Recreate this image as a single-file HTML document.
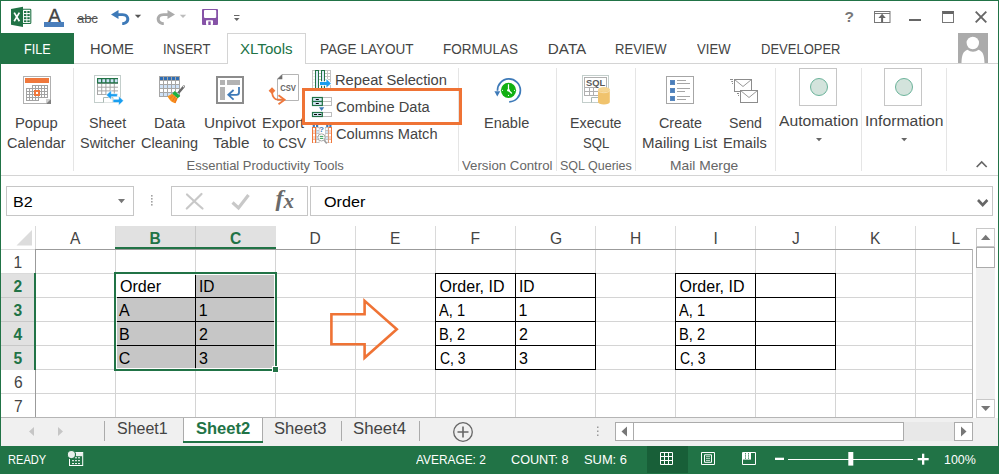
<!DOCTYPE html>
<html lang="en"><head><meta charset="utf-8"><title>Excel - XLTools Combine Data</title>
<style>
html,body{margin:0;padding:0}
body{width:999px;height:474px;position:relative;overflow:hidden;background:#fff;font-family:"Liberation Sans",sans-serif;color:#444444}
.t{position:absolute;line-height:0;white-space:pre;transform-origin:0 0}
.b{position:absolute;box-sizing:border-box}
svg{position:absolute;overflow:visible}
section,header,footer,nav,main{position:absolute;left:0;top:0}
.ln{position:absolute;background:#d4d4d4}
.sep{position:absolute;background:#e5e5e5;width:1px;top:68px;height:103px}
.blk{position:absolute;background:#000}

</style></head><body>
<header id="titlebar">
<svg style="left:11px;top:6px" width="21" height="22" viewBox="0 0 21 22">
<rect x="11.5" y="3.2" width="8.3" height="14.3" rx="0.8" fill="#fff" stroke="#217346" stroke-width="1.1"/>
<g fill="#217346"><rect x="13" y="5" width="2.4" height="2"/><rect x="16.3" y="5" width="2.4" height="2"/><rect x="13" y="8.1" width="2.4" height="2"/><rect x="16.3" y="8.1" width="2.4" height="2"/><rect x="13" y="11.2" width="2.4" height="2"/><rect x="16.3" y="11.2" width="2.4" height="2"/><rect x="13" y="14.3" width="2.4" height="1.8"/><rect x="16.3" y="14.3" width="2.4" height="1.8"/></g>
<path d="M0 3L12 0.8V21L0 18.8Z" fill="#217346"/>
<path d="M3.2 6.6L8.4 15.2M8.4 6.6L3.2 15.2" stroke="#fff" stroke-width="1.7" fill="none"/>
</svg>
<span class="t" style="left:48.3px;top:15.5px;font-size:18.8px;color:#444;-webkit-text-stroke:0.35px #444">A</span>
<div class="b" style="left:44px;top:22px;width:20px;height:5px;background:#4a7ebb"></div>
<span class="t" style="left:77px;top:18.5px;font-size:13.2px;color:#555;text-decoration:line-through;letter-spacing:-0.2px">abc</span>
<svg style="left:110px;top:9px" width="21" height="17" viewBox="0 0 21 17">
<path d="M1 5.5L8.5 1V4.2H12.5C17 4.2 19.3 7 19.3 10C19.3 13.5 16.5 16 12.2 16V13.2C14.8 13.2 16.3 12 16.3 10C16.3 8.2 15 7 12.5 7H8.5V10Z" fill="#3e7ab8"/>
</svg>
<svg style="left:134px;top:14px" width="8" height="5"><path d="M0.8 0.8H7.2L4 4Z" fill="#555"/></svg>
<svg style="left:155px;top:9px" width="21" height="17" viewBox="0 0 21 17">
<path d="M20 5.5L12.5 1V4.2H8.5C4 4.2 1.700 7 1.700 10C1.700 13.500 4.500 16 8.800 16V13.2C6.200 13.2 4.700 12 4.700 10C4.700 8.200 6 7 8.500 7H12.5V10Z" fill="#ababab"/>
</svg>
<svg style="left:179px;top:14px" width="8" height="5"><path d="M0.8 0.8H7.2L4 4Z" fill="#bdbdbd"/></svg>
<svg style="left:202px;top:9px" width="16" height="16" viewBox="0 0 16 16">
<rect x="0" y="0" width="16" height="16" rx="1" fill="#8653a7"/>
<rect x="2" y="0.9" width="12.2" height="8" rx="0.8" fill="#fff"/>
<rect x="4" y="11.3" width="7" height="4.7" rx="0.8" fill="#fff"/>
<rect x="6.300" y="12.4" width="2.400" height="3.600" fill="#8653a7"/>
</svg>
<svg style="left:234px;top:15px" width="6" height="7"><rect x="0" y="0" width="5.500" height="1" fill="#666"/><path d="M0 3H5.500L2.750 6Z" fill="#666"/></svg>
<span class="t" style="left:844.5px;top:17px;font-size:15.5px;font-weight:700;color:#777">?</span>
<svg style="left:874px;top:11px" width="17" height="12" viewBox="0 0 17 12">
<rect x="0.5" y="0.5" width="15.5" height="11" fill="none" stroke="#777" stroke-width="1"/>
<rect x="0.5" y="2" width="15.500" height="1" fill="#777"/>
<path d="M8.100 2.700L11.800 7H9.100V11.500H7.100V7H4.400Z" fill="#666"/>
</svg>
<div class="b" style="left:909px;top:19px;width:12px;height:2px;background:#666"></div>
<div class="b" style="left:942px;top:11px;width:12px;height:12px;border:1px solid #777;border-top:3px solid #666"></div>
<svg style="left:975px;top:11px" width="12" height="12" viewBox="0 0 12 12"><path d="M0.700 0.700L11.300 11.300M11.300 0.700L0.700 11.300" stroke="#666" stroke-width="1.900" fill="none"/></svg>
<svg style="left:958px;top:33px" width="30" height="30" viewBox="0 0 30 30">
<rect width="30" height="30" fill="#ababab"/>
<path d="M3.500 30C3.800 22 5 18.500 9.500 16.800C11 18 13 18.700 15 18.700C17 18.700 19 18 20.500 16.800C25 18.500 26.200 22 26.500 30Z" fill="#fff"/>
<circle cx="14.800" cy="10" r="6.200" fill="#fff"/>
</svg>

</header>
<nav id="tabs">
<div class="b" style="left:0;top:63px;width:999px;height:1px;background:#d4d4d4"></div>
<div class="b" style="left:0;top:33px;width:74px;height:31px;background:#217346"></div>
<div class="b" style="left:227px;top:33px;width:79px;height:31px;border:1px solid #d4d4d4;border-bottom:none;background:#fff"></div>

<span class="t" style="left:23.7px;top:48.6px;font-size:15.3px;transform:scaleX(0.823);color:#fff;">FILE</span>
<span class="t" style="left:90.0px;top:48.6px;font-size:15.3px;transform:scaleX(0.956);">HOME</span>
<span class="t" style="left:162.5px;top:48.6px;font-size:15.3px;transform:scaleX(0.849);">INSERT</span>
<span class="t" style="left:239.5px;top:48.6px;font-size:15.3px;transform:scaleX(0.987);color:#217346;">XLTools</span>
<span class="t" style="left:320.4px;top:48.6px;font-size:15.3px;transform:scaleX(0.885);">PAGE LAYOUT</span>
<span class="t" style="left:443.4px;top:48.6px;font-size:15.3px;transform:scaleX(0.881);">FORMULAS</span>
<span class="t" style="left:547.8px;top:48.6px;font-size:15.3px;">DATA</span>
<span class="t" style="left:615.4px;top:48.6px;font-size:15.3px;transform:scaleX(0.853);">REVIEW</span>
<span class="t" style="left:697.0px;top:48.6px;font-size:15.3px;transform:scaleX(0.857);">VIEW</span>
<span class="t" style="left:760.9px;top:48.6px;font-size:15.3px;transform:scaleX(0.850);">DEVELOPER</span>
</nav>
<section id="ribbon">
<div class="b" style="left:0;top:175px;width:999px;height:1px;background:#d4d4d4"></div>
<div class="sep" style="left:73px"></div>
<div class="sep" style="left:458px"></div>
<div class="sep" style="left:556px"></div>
<div class="sep" style="left:635px"></div>
<div class="sep" style="left:775px"></div>
<div class="sep" style="left:861px"></div>
<div class="sep" style="left:946px"></div>
<div class="b" style="left:799px;top:68px;width:38px;height:38px;border:1px solid #c6c6c6;background:#fff"></div>
<div class="b" style="left:884px;top:68px;width:38px;height:38px;border:1px solid #c6c6c6;background:#fff"></div>
<div class="b" style="left:810px;top:78px;width:18px;height:18px;border:1px solid #6bb39a;border-radius:50%;background:#d3e3dc"></div>
<div class="b" style="left:895px;top:78px;width:18px;height:18px;border:1px solid #6bb39a;border-radius:50%;background:#d3e3dc"></div>

<svg style="left:0;top:0" width="999" height="176" viewBox="0 0 999 176">
<g id="ic-calendar">
<rect x="23.5" y="76.5" width="27" height="27" fill="#fff" stroke="#b0b0b0"/>
<rect x="25" y="78" width="24" height="5" fill="#f0783c"/>
<path d="M32 85H48V98H39V101H26V88H32Z" fill="#a3a3a3"/>
<rect x="33" y="86" width="2" height="2" fill="#fff"/>
<rect x="36" y="86" width="2" height="2" fill="#fff"/>
<rect x="39" y="86" width="2" height="2" fill="#fff"/>
<rect x="42" y="86" width="2" height="2" fill="#fff"/>
<rect x="45" y="86" width="2" height="2" fill="#fff"/>
<rect x="27" y="89" width="2" height="2" fill="#fff"/>
<rect x="30" y="89" width="2" height="2" fill="#fff"/>
<rect x="33" y="89" width="2" height="2" fill="#fff"/>
<rect x="36" y="89" width="2" height="2" fill="#fff"/>
<rect x="39" y="89" width="2" height="2" fill="#fff"/>
<rect x="42" y="89" width="2" height="2" fill="#fff"/>
<rect x="45" y="89" width="2" height="2" fill="#fff"/>
<rect x="27" y="92" width="2" height="2" fill="#fff"/>
<rect x="30" y="92" width="2" height="2" fill="#fff"/>
<rect x="33" y="92" width="2" height="2" fill="#fff"/>
<rect x="36" y="92" width="2" height="2" fill="#fff"/>
<rect x="39" y="92" width="2" height="2" fill="#fff"/>
<rect x="42" y="92" width="2" height="2" fill="#fff"/>
<rect x="45" y="92" width="2" height="2" fill="#fff"/>
<rect x="27" y="95" width="2" height="2" fill="#fff"/>
<rect x="30" y="95" width="2" height="2" fill="#fff"/>
<rect x="33" y="95" width="2" height="2" fill="#fff"/>
<rect x="36" y="95" width="2" height="2" fill="#fff"/>
<rect x="39" y="95" width="2" height="2" fill="#fff"/>
<rect x="42" y="95" width="2" height="2" fill="#fff"/>
<rect x="45" y="95" width="2" height="2" fill="#fff"/>
<rect x="27" y="98" width="2" height="2" fill="#fff"/>
<rect x="30" y="98" width="2" height="2" fill="#fff"/>
<rect x="33" y="98" width="2" height="2" fill="#fff"/>
<rect x="36" y="98" width="2" height="2" fill="#fff"/>
<rect x="34" y="90" width="6" height="6" fill="#f0783c"/><rect x="36" y="92" width="2" height="2" fill="#fff"/>
<path d="M46 99H51V104H46Z" fill="#d0d0d0"/><path d="M51 99V104H46Z" fill="#7f7f7f"/>
</g>
<g id="ic-switcher">
<rect x="94.5" y="75.5" width="26" height="27" fill="#fff" stroke="#c3cecb"/>
<rect x="97" y="78" width="21" height="17" fill="#a6a6a6"/>
<rect x="98.0" y="84.0" width="3.2" height="2.7" fill="#fff"/>
<rect x="102.2" y="84.0" width="3.2" height="2.7" fill="#fff"/>
<rect x="106.4" y="84.0" width="3.2" height="2.7" fill="#fff"/>
<rect x="110.6" y="84.0" width="3.2" height="2.7" fill="#fff"/>
<rect x="114.8" y="84.0" width="3.2" height="2.7" fill="#fff"/>
<rect x="98.0" y="87.7" width="3.2" height="2.7" fill="#fff"/>
<rect x="102.2" y="87.7" width="3.2" height="2.7" fill="#fff"/>
<rect x="106.4" y="87.7" width="3.2" height="2.7" fill="#fff"/>
<rect x="110.6" y="87.7" width="3.2" height="2.7" fill="#fff"/>
<rect x="114.8" y="87.7" width="3.2" height="2.7" fill="#fff"/>
<rect x="98.0" y="91.4" width="3.2" height="2.7" fill="#fff"/>
<rect x="102.2" y="91.4" width="3.2" height="2.7" fill="#fff"/>
<rect x="106.4" y="91.4" width="3.2" height="2.7" fill="#fff"/>
<rect x="110.6" y="91.4" width="3.2" height="2.7" fill="#fff"/>
<rect x="114.8" y="91.4" width="3.2" height="2.7" fill="#fff"/>
<rect x="97" y="78" width="21" height="5.5" fill="#217346"/>
<rect x="98.20" y="79.2" width="2.8" height="3" fill="#cfe2f7"/>
<rect x="102.35" y="79.2" width="2.8" height="3" fill="#cfe2f7"/>
<rect x="106.50" y="79.2" width="2.8" height="3" fill="#cfe2f7"/>
<rect x="110.65" y="79.2" width="2.8" height="3" fill="#cfe2f7"/>
<rect x="114.80" y="79.2" width="2.8" height="3" fill="#cfe2f7"/>
<path d="M103.5 102.500V97.500H113V102.500" fill="#fff" stroke="#a9b8b3"/>
<path d="M106.300 95L111.300 90.300V93.700H117.400V96.800H111.300V99.800Z" fill="#199ef0" stroke="#fff" stroke-width="0.6"/>
<path d="M123.500 100.800L118.700 96V99.200H113V102.600H118.700V105.500Z" fill="#199ef0" stroke="#fff" stroke-width="0.6"/>
</g>
<g id="ic-cleaning">
<rect x="159" y="76" width="21" height="21" fill="#a6a6a6"/>
<rect x="160" y="77" width="3" height="3" fill="#2e6db4"/>
<rect x="164" y="77" width="3" height="3" fill="#2e6db4"/>
<rect x="168" y="77" width="3" height="3" fill="#2e6db4"/>
<rect x="172" y="77" width="3" height="3" fill="#2e6db4"/>
<rect x="176" y="77" width="3" height="3" fill="#2e6db4"/>
<rect x="160" y="81" width="3" height="3" fill="#fff"/>
<rect x="164" y="81" width="3" height="3" fill="#fff"/>
<rect x="168" y="81" width="3" height="3" fill="#fff"/>
<rect x="172" y="81" width="3" height="3" fill="#fff"/>
<rect x="176" y="81" width="3" height="3" fill="#fff"/>
<rect x="160" y="85" width="3" height="3" fill="#cfe2f7"/>
<rect x="164" y="85" width="3" height="3" fill="#cfe2f7"/>
<rect x="168" y="85" width="3" height="3" fill="#cfe2f7"/>
<rect x="172" y="85" width="3" height="3" fill="#cfe2f7"/>
<rect x="176" y="85" width="3" height="3" fill="#cfe2f7"/>
<rect x="160" y="89" width="3" height="3" fill="#fff"/>
<rect x="164" y="89" width="3" height="3" fill="#fff"/>
<rect x="168" y="89" width="3" height="3" fill="#fff"/>
<rect x="172" y="89" width="3" height="3" fill="#fff"/>
<rect x="176" y="89" width="3" height="3" fill="#fff"/>
<rect x="160" y="93" width="3" height="3" fill="#cfe2f7"/>
<rect x="164" y="93" width="3" height="3" fill="#cfe2f7"/>
<rect x="168" y="93" width="3" height="3" fill="#cfe2f7"/>
<rect x="172" y="93" width="3" height="3" fill="#cfe2f7"/>
<rect x="176" y="93" width="3" height="3" fill="#cfe2f7"/>
<path d="M183.800 86.500L179 92.300" stroke="#6a6a6a" stroke-width="2.4" stroke-linecap="round"/>
<circle cx="183.600" cy="86.600" r="0.8" fill="#e8e8e8"/>
<path d="M174.600 91L180.200 95.700L177.700 98.600L172.200 93.800Z" fill="#1fb141"/>
<path d="M172.200 93.800L177.700 98.600L175.500 103.200C172.500 103 169.500 100.300 167.500 96.300Z" fill="#f7941d"/>
<path d="M173.300 95.200L169.800 98.800M175 96.600L172.500 101.200M176.600 98L175 102.800" stroke="#ee6a24" stroke-width="0.9"/>
</g>
<g id="ic-unpivot">
<rect x="217" y="77" width="26" height="26" fill="#fff" stroke="#8c8c8c" stroke-width="2"/>
<rect x="220" y="80" width="5" height="5" fill="#b3b3b3"/><rect x="227" y="80" width="13" height="5" fill="#b3b3b3"/><rect x="220" y="87" width="5" height="13" fill="#b3b3b3"/>
<path d="M239 87V92.500Q239 94.800 236.500 94.800H228.500M233.600 90L228.300 94.800L233.600 99.600" fill="none" stroke="#3e7ab8" stroke-width="1.8"/>
</g>
<g id="ic-csv">
<path d="M282 74.500H298.500V100.500H277.500V79Z" fill="#fff" stroke="#b5b5b5"/>
<path d="M282.300 74.200V79.300H277.200Z" fill="#6e6e6e"/>
<text x="280.200" y="91.300" font-size="9.200" font-weight="700" fill="#666" font-family="Liberation Sans,sans-serif" textLength="15.8" lengthAdjust="spacingAndGlyphs">CSV</text>
<path d="M272 87.300L275.400 90.700L272 94.100L268.600 90.700Z" fill="#f0783c"/>
<path d="M272 92C272.500 97 274 99.600 278 99.700H284" fill="none" stroke="#f0783c" stroke-width="1.800"/>
<path d="M278.500 95.300L284.600 99.800L278.500 104.300" fill="none" stroke="#f0783c" stroke-width="1.800"/>
</g>
<g id="ic-repeat">
<rect x="312" y="70" width="19" height="19" fill="#c4c4c4"/>
<rect x="313" y="71" width="2" height="2.700" fill="#fff"/>
<rect x="316" y="71" width="2" height="2" fill="#fff"/>
<rect x="319" y="71" width="2" height="2" fill="#fff"/>
<rect x="322" y="71" width="2" height="2" fill="#fff"/>
<rect x="325" y="71" width="2" height="2" fill="#fff"/>
<rect x="328" y="71" width="2" height="2" fill="#fff"/>
<rect x="313" y="74" width="2" height="2.700" fill="#fff"/>
<rect x="316" y="74" width="2" height="2" fill="#fff"/>
<rect x="319" y="74" width="2" height="2" fill="#fff"/>
<rect x="322" y="74" width="2" height="2" fill="#fff"/>
<rect x="325" y="74" width="2" height="2" fill="#fff"/>
<rect x="328" y="74" width="2" height="2" fill="#fff"/>
<rect x="313" y="77" width="2" height="2.700" fill="#fff"/>
<rect x="316" y="77" width="2" height="2" fill="#fff"/>
<rect x="319" y="77" width="2" height="2" fill="#fff"/>
<rect x="322" y="77" width="2" height="2" fill="#fff"/>
<rect x="325" y="77" width="2" height="2" fill="#fff"/>
<rect x="328" y="77" width="2" height="2" fill="#fff"/>
<rect x="313" y="80" width="2" height="2.700" fill="#fff"/>
<rect x="316" y="80" width="2" height="2" fill="#fff"/>
<rect x="319" y="80" width="2" height="2" fill="#fff"/>
<rect x="322" y="80" width="2" height="2" fill="#fff"/>
<rect x="325" y="80" width="2" height="2" fill="#fff"/>
<rect x="328" y="80" width="2" height="2" fill="#fff"/>
<rect x="313" y="83" width="2" height="2.700" fill="#fff"/>
<rect x="316" y="83" width="2" height="2" fill="#fff"/>
<rect x="319" y="83" width="2" height="2" fill="#fff"/>
<rect x="322" y="83" width="2" height="2" fill="#fff"/>
<rect x="325" y="83" width="2" height="2" fill="#fff"/>
<rect x="328" y="83" width="2" height="2" fill="#fff"/>
<rect x="313" y="86" width="2" height="2.700" fill="#fff"/>
<rect x="316" y="86" width="2" height="2" fill="#fff"/>
<rect x="319" y="86" width="2" height="2" fill="#fff"/>
<rect x="322" y="86" width="2" height="2" fill="#fff"/>
<rect x="325" y="86" width="2" height="2" fill="#fff"/>
<rect x="328" y="86" width="2" height="2" fill="#fff"/>
<rect x="315" y="70" width="4" height="19" fill="#217346"/>
<rect x="316" y="71" width="2" height="3" fill="#dbe9f9"/>
<rect x="316" y="74" width="2" height="3" fill="#dbe9f9"/>
<rect x="316" y="77" width="2" height="3" fill="#dbe9f9"/>
<rect x="316" y="80" width="2" height="3" fill="#dbe9f9"/>
<rect x="316" y="83" width="2" height="3" fill="#dbe9f9"/>
<rect x="316" y="86" width="2" height="3" fill="#dbe9f9"/>
<rect x="321" y="70" width="4" height="19" fill="#217346"/>
<rect x="322" y="71" width="2" height="3" fill="#dbe9f9"/>
<rect x="322" y="74" width="2" height="3" fill="#dbe9f9"/>
<rect x="322" y="77" width="2" height="3" fill="#dbe9f9"/>
<rect x="322" y="80" width="2" height="3" fill="#dbe9f9"/>
<rect x="322" y="83" width="2" height="3" fill="#dbe9f9"/>
<rect x="322" y="86" width="2" height="3" fill="#dbe9f9"/>
<path d="M320 82H326.400V79.200L330.900 83.400L326.400 87.600V85H320Z" fill="#fff" stroke="#fff" stroke-width="1.6"/><path d="M320 81.900H326.400V79.200L330.900 83.400L326.400 87.600V85.100H320Z" fill="#199ef0"/>
</g>
<g id="ic-combine">
<rect x="322.5" y="97.5" width="9" height="4" fill="#fff" stroke="#bdbdbd"/>
<rect x="322.5" y="101.5" width="9" height="4" fill="#fff" stroke="#bdbdbd"/>
<rect x="322.5" y="112.5" width="9" height="4" fill="#fff" stroke="#bdbdbd"/>
<rect x="312.500" y="97.5" width="9.800" height="4" fill="#dbe9f9" stroke="#217346" stroke-width="1.2"/>
<rect x="312.500" y="101.5" width="9.800" height="4" fill="#dbe9f9" stroke="#217346" stroke-width="1.2"/>
<rect x="312.500" y="112.5" width="9.800" height="4" fill="#dbe9f9" stroke="#217346" stroke-width="1.2"/>
<rect x="315.800" y="99" width="3" height="1" fill="#000"/><rect x="315.800" y="103" width="3" height="1" fill="#000"/>
<rect x="314" y="114" width="3" height="1" fill="#000"/><rect x="318.300" y="114" width="3" height="1" fill="#000"/>
<path d="M319 107.300H324.200L321.600 110.900Z" fill="#3e7ab8"/>
</g>
<g id="ic-match">
<rect x="312.7" y="125" width="2.2" height="2" fill="#3e7ab8"/>
<rect x="316" y="125" width="2.2" height="2" fill="#3e7ab8"/>
<rect x="326.2" y="125" width="2.2" height="2" fill="#3e7ab8"/>
<rect x="329.3" y="125" width="2.2" height="2" fill="#3e7ab8"/>
<rect x="312" y="127" width="4" height="16" fill="#f0783c"/>
<rect x="313" y="128" width="2" height="2.700" fill="#fff"/>
<rect x="313" y="131" width="2" height="2.700" fill="#f6d9cc"/>
<rect x="313" y="134" width="2" height="2.700" fill="#fff"/>
<rect x="313" y="137" width="2" height="2.700" fill="#f6d9cc"/>
<rect x="313" y="140" width="2" height="2.700" fill="#fff"/>
<rect x="328" y="127" width="4" height="16" fill="#f0783c"/>
<rect x="329" y="128" width="2" height="2.700" fill="#fff"/>
<rect x="329" y="131" width="2" height="2.700" fill="#f6d9cc"/>
<rect x="329" y="134" width="2" height="2.700" fill="#fff"/>
<rect x="329" y="137" width="2" height="2.700" fill="#f6d9cc"/>
<rect x="329" y="140" width="2" height="2.700" fill="#fff"/>
<rect x="316" y="127" width="3.500" height="16" fill="#c4c4c4"/>
<rect x="316.7" y="128" width="2.100" height="2" fill="#fff"/>
<rect x="316.7" y="131" width="2.100" height="2" fill="#cfe5fa"/>
<rect x="316.7" y="134" width="2.100" height="2" fill="#fff"/>
<rect x="316.7" y="137" width="2.100" height="2" fill="#cfe5fa"/>
<rect x="316.7" y="140" width="2.100" height="2" fill="#fff"/>
<rect x="325" y="127" width="3.500" height="16" fill="#c4c4c4"/>
<rect x="325.7" y="128" width="2.100" height="2" fill="#fff"/>
<rect x="325.7" y="131" width="2.100" height="2" fill="#cfe5fa"/>
<rect x="325.7" y="134" width="2.100" height="2" fill="#fff"/>
<rect x="325.7" y="137" width="2.100" height="2" fill="#cfe5fa"/>
<rect x="325.7" y="140" width="2.100" height="2" fill="#fff"/>
<text x="321.500" y="131.800" font-size="8" font-weight="700" fill="#3e7ab8" text-anchor="middle" font-family="Liberation Sans,sans-serif">?</text>
<path d="M324 140L326.800 143.400" stroke="#a0a0a0" stroke-width="1.600"/>
<circle cx="321.500" cy="137.400" r="3.600" fill="#fff" stroke="#a8a8a8" stroke-width="1"/>
<rect x="319.800" y="135.900" width="3.500" height="0.9" fill="#1a9641"/><rect x="319.800" y="137.900" width="3.500" height="0.9" fill="#1a9641"/>
</g>
<g id="ic-clock">
<path d="M509.200 101.800A11.450 11.450 0 1 0 497.500 90.800" fill="none" stroke="#3e7ab8" stroke-width="1.700"/>
<path d="M494.400 91.300H500.200L497.300 96.400Z" fill="#3e7ab8"/>
<circle cx="508.500" cy="90.300" r="7.600" fill="#12b012"/>
<path d="M508.500 84.200V90.300L511.800 93.500" fill="none" stroke="#fff" stroke-width="1.200"/>
<circle cx="508.500" cy="90.300" r="1.300" fill="#fff"/>
<circle cx="502.500" cy="90.300" r="0.600" fill="#fff"/><circle cx="514.500" cy="90.300" r="0.600" fill="#fff"/><circle cx="508.500" cy="95.400" r="0.600" fill="#fff"/>
</g>
<g id="ic-sql">
<rect x="582.500" y="75.500" width="26" height="27" fill="#fff" stroke="#c3cecb"/>
<rect x="584.500" y="77.500" width="22" height="18" fill="#fff" stroke="#b0b0b0"/>
<path d="M584.500 87.500H598M584.500 91.500H598M589.500 87.500V95.500M593.500 87.500V95.500" stroke="#b0b0b0" fill="none"/>
<text x="586" y="85.700" font-size="9.600" font-weight="700" fill="#5a5a5a" font-family="Liberation Sans,sans-serif" textLength="19.2" lengthAdjust="spacingAndGlyphs">SQL</text>
<path d="M591.500 102.500V97.500H598.500" fill="none" stroke="#a9b8b3"/>
<path d="M598 89.500V102A5.900 2.400 0 0 0 609.800 102V89.500Z" fill="#f0c36d"/>
<ellipse cx="603.900" cy="89.500" rx="5.900" ry="2.400" fill="#f5d592"/>
<path d="M598 90.300A5.900 2.400 0 0 0 609.800 90.300" fill="none" stroke="#fbeccb" stroke-width="0.700"/>
</g>
<g id="ic-mailing">
<rect x="666.500" y="76.500" width="27" height="27" fill="#fff" stroke="#a6a6a6"/>
<rect x="670.250" y="80.25" width="4.500" height="4.500" fill="#4a7ebb" stroke="#3e74b3" stroke-width="0.5"/>
<rect x="670.250" y="88.25" width="4.500" height="4.500" fill="#4a7ebb" stroke="#3e74b3" stroke-width="0.5"/>
<rect x="670.250" y="96.25" width="4.500" height="4.500" fill="#4a7ebb" stroke="#3e74b3" stroke-width="0.5"/>
<rect x="677" y="80" width="9" height="1" fill="#a6a6a6"/>
<rect x="677" y="83" width="13" height="1" fill="#a6a6a6"/>
<rect x="677" y="88" width="13" height="1" fill="#a6a6a6"/>
<rect x="677" y="91" width="8" height="1" fill="#a6a6a6"/>
<rect x="677" y="96" width="13" height="1" fill="#a6a6a6"/>
<rect x="677" y="99" width="9" height="1" fill="#a6a6a6"/>
</g>
<g id="ic-send">
<rect x="734.500" y="79.500" width="17" height="12" fill="#fff" stroke="#8c8c8c"/>
<path d="M734.500 79.500L743 86.500L751.500 79.500" fill="none" stroke="#8c8c8c" stroke-width="0.9"/>
<rect x="740.500" y="90.500" width="17" height="12" fill="#fff" stroke="#8c8c8c"/>
<path d="M740.500 90.500L749 97.500L757.500 90.500" fill="none" stroke="#8c8c8c" stroke-width="0.9"/>
<path d="M730 79.500H733M731.300 81.500H733M732 83.500H733M737 93.500H739M738 95.500H739" stroke="#8c8c8c" fill="none"/>
</g>
<path d="M816 138H822L819 141.300Z" fill="#666"/><path d="M901.200 138H907.200L904.200 141.300Z" fill="#666"/>
<path d="M976.700 167L981.700 162L986.700 167" fill="none" stroke="#666" stroke-width="1.700"/>
</svg>
<span class="t" style="left:14.5px;top:122.6px;font-size:15.5px;transform:scaleX(0.955);">Popup</span>
<span class="t" style="left:7.0px;top:142.6px;font-size:15.5px;transform:scaleX(0.933);">Calendar</span>
<span class="t" style="left:89.1px;top:122.6px;font-size:15.5px;transform:scaleX(0.920);">Sheet</span>
<span class="t" style="left:79.6px;top:142.6px;font-size:15.5px;transform:scaleX(0.932);">Switcher</span>
<span class="t" style="left:153.5px;top:122.6px;font-size:15.5px;transform:scaleX(0.953);">Data</span>
<span class="t" style="left:141.2px;top:142.6px;font-size:15.5px;transform:scaleX(0.934);">Cleaning</span>
<span class="t" style="left:203.5px;top:122.6px;font-size:15.5px;transform:scaleX(0.987);">Unpivot</span>
<span class="t" style="left:212.5px;top:142.6px;font-size:15.5px;transform:scaleX(0.981);">Table</span>
<span class="t" style="left:261.6px;top:122.6px;font-size:15.5px;transform:scaleX(0.939);">Export</span>
<span class="t" style="left:262.5px;top:142.6px;font-size:15.5px;transform:scaleX(0.878);">to CSV</span>
<span class="t" style="left:569.5px;top:122.6px;font-size:15.5px;transform:scaleX(0.920);">Execute</span>
<span class="t" style="left:582.8px;top:142.6px;font-size:15.5px;transform:scaleX(0.847);">SQL</span>
<span class="t" style="left:658.8px;top:122.6px;font-size:15.5px;transform:scaleX(0.926);">Create</span>
<span class="t" style="left:641.6px;top:142.6px;font-size:15.5px;transform:scaleX(0.970);">Mailing List</span>
<span class="t" style="left:728.8px;top:122.6px;font-size:15.5px;transform:scaleX(0.911);">Send</span>
<span class="t" style="left:723.4px;top:142.6px;font-size:15.5px;transform:scaleX(0.940);">Emails</span>
<span class="t" style="left:483.9px;top:122.6px;font-size:15.5px;transform:scaleX(0.938);">Enable</span>
<span class="t" style="left:779.0px;top:120.6px;font-size:15.5px;transform:scaleX(1.012);">Automation</span>
<span class="t" style="left:864.6px;top:120.6px;font-size:15.5px;transform:scaleX(1.012);">Information</span>
<span class="t" style="left:334.8px;top:80.0px;font-size:15.5px;transform:scaleX(0.948);">Repeat Selection</span>
<span class="t" style="left:335.5px;top:106.9px;font-size:15.5px;transform:scaleX(0.946);">Combine Data</span>
<span class="t" style="left:335.5px;top:134.1px;font-size:15.5px;transform:scaleX(0.943);">Columns Match</span>
<span class="t" style="left:186.5px;top:165.8px;font-size:13px;color:#666666;">Essential Productivity Tools</span>
<span class="t" style="left:461.9px;top:165.8px;font-size:13px;transform:scaleX(1.018);color:#666666;">Version Control</span>
<span class="t" style="left:559.5px;top:165.8px;font-size:13px;transform:scaleX(0.962);color:#666666;">SQL Queries</span>
<span class="t" style="left:670.4px;top:165.8px;font-size:13px;transform:scaleX(1.062);color:#666666;">Mail Merge</span>
<div class="b" style="left:302px;top:88px;width:160px;height:37px;border:3px solid #ef7335"></div>

</section>
<section id="formulabar">
<div class="b" style="left:6px;top:186px;width:128px;height:30px;border:1px solid #c6c6c6;background:#fff"></div>
<div class="b" style="left:171px;top:186px;width:137px;height:30px;border:1px solid #c6c6c6;background:#fff"></div>
<div class="b" style="left:310px;top:186px;width:683px;height:30px;border:1px solid #c6c6c6;background:#fff"></div>
<svg style="left:0;top:180px" width="999" height="40" viewBox="0 180 999 40">
<path d="M118 199H125L121.500 203.200Z" fill="#777"/>
<g fill="#a2a2a2"><rect x="151" y="195" width="1.600" height="1.600"/><rect x="151" y="198" width="1.600" height="1.600"/><rect x="151" y="201" width="1.600" height="1.600"/><rect x="151" y="204" width="1.600" height="1.600"/></g>
<path d="M187 194.500C192 199 197 204 202.500 208.500M201.500 194C196 199.500 191.500 204 186.800 208.500" fill="none" stroke="#c8c8c8" stroke-width="2.200" stroke-linecap="round"/>
<path d="M232.500 202.500L238.500 208L248.500 195" fill="none" stroke="#c8c8c8" stroke-width="3.200"/>
<path d="M978 200L982.700 205L987.400 200" fill="none" stroke="#666" stroke-width="2.600"/>
</svg>
<span class="t" style="left:275.500px;top:198px;font-family:'Liberation Serif',serif;font-style:italic;font-weight:700;font-size:24px;color:#6a6a6a">f</span>
<span class="t" style="left:283.500px;top:200.700px;font-family:'Liberation Serif',serif;font-style:italic;font-weight:700;font-size:21px;color:#6a6a6a">x</span>

<span class="t" style="left:12.7px;top:201.5px;font-size:15.2px;transform:scaleX(1.059);color:#000;">B2</span>
<span class="t" style="left:324.3px;top:201.5px;font-size:15.2px;transform:scaleX(1.064);color:#000;">Order</span>
</section>
<main id="grid">
<div class="ln" style="left:115px;top:250px;width:1px;height:167px"></div>
<div class="ln" style="left:115px;top:226px;width:1px;height:23px;background:#dadada"></div>
<div class="ln" style="left:195px;top:250px;width:1px;height:167px"></div>
<div class="ln" style="left:195px;top:226px;width:1px;height:23px;background:#dadada"></div>
<div class="ln" style="left:275px;top:250px;width:1px;height:167px"></div>
<div class="ln" style="left:275px;top:226px;width:1px;height:23px;background:#dadada"></div>
<div class="ln" style="left:355px;top:250px;width:1px;height:167px"></div>
<div class="ln" style="left:355px;top:226px;width:1px;height:23px;background:#dadada"></div>
<div class="ln" style="left:435px;top:250px;width:1px;height:167px"></div>
<div class="ln" style="left:435px;top:226px;width:1px;height:23px;background:#dadada"></div>
<div class="ln" style="left:515px;top:250px;width:1px;height:167px"></div>
<div class="ln" style="left:515px;top:226px;width:1px;height:23px;background:#dadada"></div>
<div class="ln" style="left:595px;top:250px;width:1px;height:167px"></div>
<div class="ln" style="left:595px;top:226px;width:1px;height:23px;background:#dadada"></div>
<div class="ln" style="left:675px;top:250px;width:1px;height:167px"></div>
<div class="ln" style="left:675px;top:226px;width:1px;height:23px;background:#dadada"></div>
<div class="ln" style="left:755px;top:250px;width:1px;height:167px"></div>
<div class="ln" style="left:755px;top:226px;width:1px;height:23px;background:#dadada"></div>
<div class="ln" style="left:835px;top:250px;width:1px;height:167px"></div>
<div class="ln" style="left:835px;top:226px;width:1px;height:23px;background:#dadada"></div>
<div class="ln" style="left:915px;top:250px;width:1px;height:167px"></div>
<div class="ln" style="left:915px;top:226px;width:1px;height:23px;background:#dadada"></div>
<div class="ln" style="left:36px;top:273px;width:936px;height:1px"></div>
<div class="ln" style="left:1px;top:273px;width:34px;height:1px;background:#dadada"></div>
<div class="ln" style="left:36px;top:297px;width:936px;height:1px"></div>
<div class="ln" style="left:1px;top:297px;width:34px;height:1px;background:#dadada"></div>
<div class="ln" style="left:36px;top:321px;width:936px;height:1px"></div>
<div class="ln" style="left:1px;top:321px;width:34px;height:1px;background:#dadada"></div>
<div class="ln" style="left:36px;top:345px;width:936px;height:1px"></div>
<div class="ln" style="left:1px;top:345px;width:34px;height:1px;background:#dadada"></div>
<div class="ln" style="left:36px;top:369px;width:936px;height:1px"></div>
<div class="ln" style="left:1px;top:369px;width:34px;height:1px;background:#dadada"></div>
<div class="ln" style="left:36px;top:393px;width:936px;height:1px"></div>
<div class="ln" style="left:1px;top:393px;width:34px;height:1px;background:#dadada"></div>
<div class="ln" style="left:36px;top:417px;width:936px;height:1px"></div>
<div class="ln" style="left:1px;top:417px;width:34px;height:1px;background:#dadada"></div>
<div class="ln" style="left:35px;top:226px;width:1px;height:23px;background:#dadada"></div>
<div class="ln" style="left:1px;top:249px;width:34px;height:1px;background:#dadada"></div>
<div class="ln" style="left:35px;top:249px;width:938px;height:1px;background:#9b9b9b"></div>
<div class="ln" style="left:35px;top:249px;width:1px;height:169px;background:#9b9b9b"></div>
<div class="ln" style="left:972px;top:249px;width:1px;height:169px;background:#b5b5b5"></div>
<div class="ln" style="left:0;top:417px;width:973px;height:1px;background:#b5b5b5"></div>
<svg style="left:16px;top:230px" width="16" height="16"><path d="M16 0V15.5H0.5Z" fill="#dcdcdc"/></svg>
<div class="b" style="left:116px;top:226px;width:160px;height:21px;background:#e1e1e1"></div>
<div class="ln" style="left:195px;top:226px;width:1px;height:21px;background:#c8c8c8"></div>
<div class="b" style="left:115px;top:247px;width:161px;height:2px;background:#217346"></div>
<div class="b" style="left:1px;top:274px;width:33px;height:96px;background:#e1e1e1"></div>
<div class="ln" style="left:1px;top:297px;width:33px;height:1px;background:#c8c8c8"></div>
<div class="ln" style="left:1px;top:321px;width:33px;height:1px;background:#c8c8c8"></div>
<div class="ln" style="left:1px;top:345px;width:33px;height:1px;background:#c8c8c8"></div>
<div class="b" style="left:34px;top:273px;width:2px;height:97px;background:#217346"></div>
<div class="b" style="left:117px;top:298px;width:157px;height:70px;background:#c6c6c6"></div>
<div class="b" style="left:196px;top:275px;width:78px;height:23px;background:#c6c6c6"></div>
<div class="blk" style="left:195px;top:275px;width:1px;height:93px"></div>
<div class="blk" style="left:117px;top:297px;width:157px;height:1px"></div>
<div class="blk" style="left:117px;top:321px;width:157px;height:1px"></div>
<div class="blk" style="left:117px;top:345px;width:157px;height:1px"></div>
<div class="b" style="left:114px;top:272px;width:163px;height:99px;border:2px solid #217346"></div>
<div class="b" style="left:272px;top:366px;width:7px;height:7px;background:#fff"></div>
<div class="b" style="left:273px;top:367px;width:5px;height:5px;background:#217346"></div>
<div class="blk" style="left:435px;top:273px;width:1px;height:97px"></div>
<div class="blk" style="left:515px;top:273px;width:1px;height:97px"></div>
<div class="blk" style="left:595px;top:273px;width:1px;height:97px"></div>
<div class="blk" style="left:435px;top:273px;width:161px;height:1px"></div>
<div class="blk" style="left:435px;top:297px;width:161px;height:1px"></div>
<div class="blk" style="left:435px;top:321px;width:161px;height:1px"></div>
<div class="blk" style="left:435px;top:345px;width:161px;height:1px"></div>
<div class="blk" style="left:435px;top:369px;width:161px;height:1px"></div>
<div class="blk" style="left:675px;top:273px;width:1px;height:97px"></div>
<div class="blk" style="left:755px;top:273px;width:1px;height:97px"></div>
<div class="blk" style="left:835px;top:273px;width:1px;height:97px"></div>
<div class="blk" style="left:675px;top:273px;width:161px;height:1px"></div>
<div class="blk" style="left:675px;top:297px;width:161px;height:1px"></div>
<div class="blk" style="left:675px;top:321px;width:161px;height:1px"></div>
<div class="blk" style="left:675px;top:345px;width:161px;height:1px"></div>
<div class="blk" style="left:675px;top:369px;width:161px;height:1px"></div>
<svg style="left:0;top:0" width="999" height="474"><path d="M331.4 314.3H364.6V300.8L396.8 329.3L364.6 357.8V344.3H331.4Z" fill="none" stroke="#ef7335" stroke-width="2.6" stroke-linejoin="miter"/></svg>
<div class="b" style="left:976px;top:247px;width:19px;height:153px;background:#f0f0f0"></div>
<div class="b" style="left:976px;top:228px;width:19px;height:19px;border:1px solid #c8c8c8;background:#fff"></div>
<div class="b" style="left:976px;top:247px;width:19px;height:21px;border:1px solid #ababab;background:#fff"></div>
<div class="b" style="left:976px;top:399px;width:19px;height:19px;border:1px solid #c8c8c8;background:#fff"></div>
<svg style="left:976px;top:228px" width="19" height="19"><path d="M5 12L9.700 6.800L14.400 12Z" fill="#777"/></svg>
<svg style="left:976px;top:399px" width="19" height="19"><path d="M5 7L9.700 12L14.400 7Z" fill="#777"/></svg>
<span class="t" style="left:70.0px;top:238.9px;font-size:15.6px;">A</span>
<span class="t" style="left:149.5px;top:238.9px;font-size:15.6px;color:#217346;font-weight:700;">B</span>
<span class="t" style="left:230.0px;top:238.9px;font-size:15.6px;color:#217346;font-weight:700;">C</span>
<span class="t" style="left:309.5px;top:238.9px;font-size:15.6px;">D</span>
<span class="t" style="left:390.0px;top:238.9px;font-size:15.6px;">E</span>
<span class="t" style="left:470.5px;top:238.9px;font-size:15.6px;">F</span>
<span class="t" style="left:550.0px;top:238.9px;font-size:15.6px;">G</span>
<span class="t" style="left:630.0px;top:238.9px;font-size:15.6px;">H</span>
<span class="t" style="left:713.5px;top:238.9px;font-size:15.6px;">I</span>
<span class="t" style="left:792.0px;top:238.9px;font-size:15.6px;">J</span>
<span class="t" style="left:870.0px;top:238.9px;font-size:15.6px;">K</span>
<span class="t" style="left:951.5px;top:238.9px;font-size:15.6px;">L</span>
<span class="t" style="left:13.5px;top:262.8px;font-size:15.6px;">1</span>
<span class="t" style="left:13.5px;top:286.8px;font-size:15.6px;color:#217346;font-weight:700;">2</span>
<span class="t" style="left:13.5px;top:310.8px;font-size:15.6px;color:#217346;font-weight:700;">3</span>
<span class="t" style="left:13.5px;top:334.8px;font-size:15.6px;color:#217346;font-weight:700;">4</span>
<span class="t" style="left:13.5px;top:358.8px;font-size:15.6px;color:#217346;font-weight:700;">5</span>
<span class="t" style="left:14.0px;top:382.8px;font-size:15.6px;">6</span>
<span class="t" style="left:14.0px;top:406.8px;font-size:15.6px;">7</span>
<span class="t" style="left:119.6px;top:286.5px;font-size:16px;transform:scaleX(1.005);color:#000;">Order</span>
<span class="t" style="left:198.5px;top:286.5px;font-size:16px;transform:scaleX(0.967);color:#000;">ID</span>
<span class="t" style="left:119.0px;top:310.5px;font-size:16px;color:#000;">A</span>
<span class="t" style="left:198.7px;top:310.5px;font-size:16px;color:#000;">1</span>
<span class="t" style="left:118.9px;top:334.5px;font-size:16px;color:#000;">B</span>
<span class="t" style="left:199.0px;top:334.5px;font-size:16px;color:#000;">2</span>
<span class="t" style="left:118.7px;top:358.5px;font-size:16px;color:#000;">C</span>
<span class="t" style="left:199.0px;top:358.5px;font-size:16px;color:#000;">3</span>
<span class="t" style="left:439.6px;top:286.5px;font-size:16px;color:#000;">Order, ID</span>
<span class="t" style="left:439.4px;top:310.5px;font-size:16px;transform:scaleX(0.914);color:#000;">A, 1</span>
<span class="t" style="left:439.4px;top:334.5px;font-size:16px;transform:scaleX(0.915);color:#000;">B, 2</span>
<span class="t" style="left:439.8px;top:358.5px;font-size:16px;transform:scaleX(0.869);color:#000;">C, 3</span>
<span class="t" style="left:679.6px;top:286.5px;font-size:16px;color:#000;">Order, ID</span>
<span class="t" style="left:679.4px;top:310.5px;font-size:16px;transform:scaleX(0.914);color:#000;">A, 1</span>
<span class="t" style="left:679.4px;top:334.5px;font-size:16px;transform:scaleX(0.915);color:#000;">B, 2</span>
<span class="t" style="left:679.8px;top:358.5px;font-size:16px;transform:scaleX(0.869);color:#000;">C, 3</span>
<span class="t" style="left:519.1px;top:286.5px;font-size:16px;transform:scaleX(0.973);color:#000;">ID</span>
<span class="t" style="left:518.6px;top:310.5px;font-size:16px;color:#000;">1</span>
<span class="t" style="left:519.0px;top:334.5px;font-size:16px;color:#000;">2</span>
<span class="t" style="left:519.0px;top:358.5px;font-size:16px;color:#000;">3</span>

</main>
<nav id="sheets">
<div class="b" style="left:0;top:418px;width:999px;height:28px;background:#f0f0f0"></div>
<div class="b" style="left:183px;top:418px;width:80px;height:25px;background:#fff;border-left:1px solid #ababab;border-right:1px solid #ababab"></div>
<div class="b" style="left:183px;top:441px;width:80px;height:2px;background:#217346"></div>
<div class="b" style="left:104px;top:421px;width:1px;height:20px;background:#ababab"></div>
<div class="b" style="left:341px;top:421px;width:1px;height:20px;background:#ababab"></div>
<div class="b" style="left:419px;top:421px;width:1px;height:20px;background:#ababab"></div>
<svg style="left:28px;top:426px" width="40" height="12"><path d="M6 1V10L1 5.5Z" fill="#c6c6c6"/><path d="M30 1V10L35 5.5Z" fill="#c6c6c6"/></svg>
<svg style="left:452px;top:421px" width="22" height="22"><circle cx="11" cy="11" r="9.3" fill="none" stroke="#666" stroke-width="1.3"/><path d="M11 5.5V16.5M5.5 11H16.5" stroke="#666" stroke-width="1.6"/></svg>
<div class="b" style="left:615px;top:422px;width:19px;height:19px;border:1px solid #ababab;background:#fff"></div>
<div class="b" style="left:633px;top:422px;width:271px;height:19px;border:1px solid #ababab;background:#fff"></div>
<div class="b" style="left:904px;top:422px;width:50px;height:19px;background:#e8e8e8"></div>
<div class="b" style="left:954px;top:422px;width:19px;height:19px;border:1px solid #ababab;background:#fff"></div>
<svg style="left:615px;top:422px" width="19" height="19"><path d="M12 4.5V14.5L6.5 9.5Z" fill="#777"/></svg>
<svg style="left:954px;top:422px" width="19" height="19"><path d="M7 4.5V14.5L12.5 9.5Z" fill="#777"/></svg>
<svg style="left:596px;top:426px" width="4" height="12"><rect x="1" y="0.5" width="1.5" height="1.5" fill="#999"/><rect x="1" y="4.5" width="1.5" height="1.5" fill="#999"/><rect x="1" y="8.5" width="1.5" height="1.5" fill="#999"/></svg>

<span class="t" style="left:116.5px;top:429.1px;font-size:16.8px;transform:scaleX(0.952);">Sheet1</span>
<span class="t" style="left:195.8px;top:429.1px;font-size:16.8px;transform:scaleX(0.985);color:#217346;font-weight:700;">Sheet2</span>
<span class="t" style="left:274.0px;top:429.1px;font-size:16.8px;transform:scaleX(0.987);">Sheet3</span>
<span class="t" style="left:353.0px;top:429.1px;font-size:16.8px;">Sheet4</span>
</nav>
<footer id="status">
<div class="b" style="left:0;top:446px;width:999px;height:28px;background:#217346"></div>
<div class="b" style="left:647px;top:446px;width:41px;height:27px;background:#185f38"></div>
<svg style="left:0;top:446px" width="999" height="28" viewBox="0 446 999 28">
<g id="ic-macro">
<rect x="69.500" y="452.500" width="13.200" height="13" fill="none" stroke="#fff"/>
<rect x="76" y="452.500" width="6.700" height="3.700" fill="#eaf1ed"/>
<circle cx="71.400" cy="454.600" r="4.100" fill="#e8efeb" stroke="#217346" stroke-width="1.100"/>
<g fill="#fff"><rect x="75" y="457.300" width="2" height="1"/><rect x="78" y="457.300" width="2" height="1"/>
<rect x="72" y="460.200" width="2" height="1"/><rect x="75" y="460.200" width="2" height="1"/><rect x="78" y="460.200" width="2" height="1"/>
<rect x="72" y="463.100" width="2" height="1"/><rect x="75" y="463.100" width="2" height="1"/><rect x="78" y="463.100" width="2" height="1"/></g>
</g>
<path d="M660.500 452.500H672.500V464.500H660.500ZM664.500 452.500V464.500M668.500 452.500V464.500M660.500 456.500H672.500M660.500 460.500H672.500" fill="none" stroke="#fff"/>
<path d="M701.500 452.500H714.500V464.500H701.500ZM704.500 454.800H711.500V462.300H704.500Z" fill="none" stroke="#fff"/>
<path d="M706 456.700H710M706 458.600H710M706 460.500H710" stroke="#fff" stroke-width="0.700"/>
<path d="M742.500 452.500H755.500V464.500H742.500Z" fill="none" stroke="#fff"/>
<rect x="743" y="452" width="8" height="7.600" fill="#fff"/>
<path d="M745.500 453V459M748.500 453V459" stroke="#217346" stroke-width="0.800" stroke-dasharray="1.5 0.7"/>
<rect x="775" y="457.700" width="9" height="2.300" fill="#fff"/>
<rect x="788" y="459" width="125" height="1" fill="#fff"/>
<rect x="848.300" y="452" width="5" height="13.600" fill="#fff"/>
<rect x="917.700" y="458" width="11" height="2.300" fill="#fff"/>
<rect x="922" y="453.700" width="2.300" height="11" fill="#fff"/>
</svg>

<span class="t" style="left:7.9px;top:459.9px;font-size:13px;transform:scaleX(0.852);color:#fff;">READY</span>
<span class="t" style="left:416.0px;top:459.9px;font-size:13px;transform:scaleX(0.914);color:#fff;">AVERAGE: 2</span>
<span class="t" style="left:511.4px;top:459.9px;font-size:13px;transform:scaleX(0.973);color:#fff;">COUNT: 8</span>
<span class="t" style="left:584.0px;top:459.9px;font-size:13px;transform:scaleX(0.990);color:#fff;">SUM: 6</span>
<span class="t" style="left:943.8px;top:459.9px;font-size:13px;transform:scaleX(0.956);color:#fff;">100%</span>
</footer>
<div class="b" style="left:0;top:0;width:999px;height:474px;border:1px solid #217346;border-bottom:none;pointer-events:none"></div>
</body></html>
